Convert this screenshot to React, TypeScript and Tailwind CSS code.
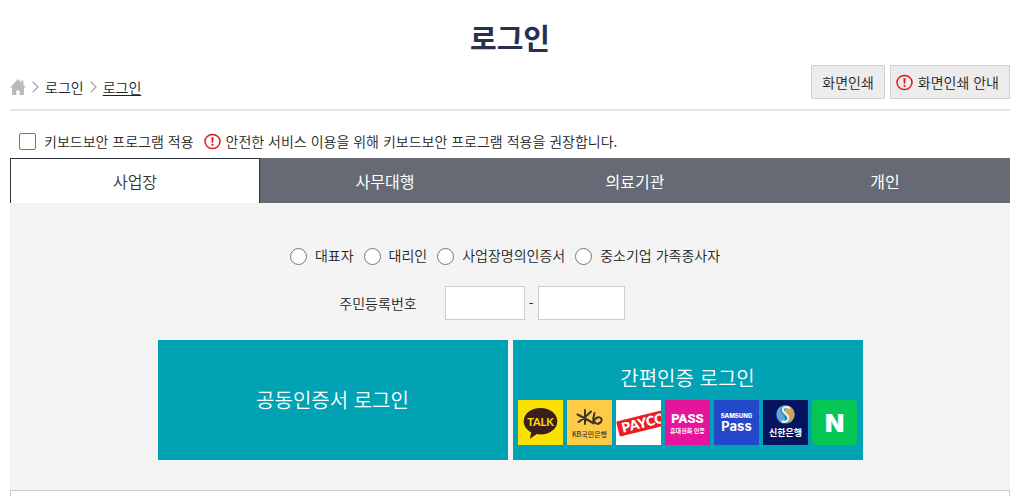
import { useState } from "react";
import type { ReactNode } from "react";

const TABS = ["사업장", "사무대행", "의료기관", "개인"];

const USER_TYPES = [
  { id: "owner", label: "대표자" },
  { id: "agent", label: "대리인" },
  { id: "company", label: "사업장명의인증서" },
  { id: "family", label: "중소기업 가족종사자" },
];

function HomeIcon() {
  return (
    <svg width="16" height="16" viewBox="0 0 16 16" fill="#b9b9b9" aria-hidden="true">
      <path d="M8 0 0 8.6h2.1V16h4.2v-4.6h3.4V16h4.2V8.6H16l-2.6-2.8V1.6h-2.2v1.8z" />
    </svg>
  );
}

function Chevron() {
  return (
    <svg width="7" height="12" viewBox="0 0 7 12" fill="none" stroke="#a5a5a5" strokeWidth="1.2" aria-hidden="true">
      <path d="M.7.8 6 6 .7 11.2" />
    </svg>
  );
}

function AlertIcon() {
  return (
    <svg width="17" height="17" viewBox="0 0 17 17" fill="none" className="shrink-0" aria-hidden="true">
      <ellipse cx="8.5" cy="8.5" rx="7.5" ry="7" stroke="#e5151b" strokeWidth="1.5" />
      <path d="M7.4 4.2h2.2l-.4 5.6H7.8z" fill="#e5151b" />
      <circle cx="8.5" cy="11.8" r="1.1" fill="#e5151b" />
    </svg>
  );
}

function Logo({ children, label, rounded }: { children: ReactNode; label: string; rounded?: boolean }) {
  return (
    <svg
      width="45"
      height="45"
      viewBox="0 0 45 45"
      role="img"
      aria-label={label}
      textAnchor="middle"
      className={rounded ? "rounded overflow-hidden" : "overflow-hidden"}
    >
      {children}
    </svg>
  );
}

function ProviderLogos() {
  return (
    <span className="flex justify-center gap-1">
      <Logo label="카카오톡">
        <rect width="45" height="45" fill="#fae100" />
        <path
          d="M22.5 8C13 8 5.7 13.8 5.7 21.2c0 4.7 3 8.8 7.5 11.1l-1.3 6.5 7-4.7c1.2.2 2.4.3 3.6.3 9.5 0 16.8-5.8 16.8-13.2S32 8 22.5 8z"
          fill="#3b1e1e"
        />
        <text x="22.5" y="26" fontSize="11" fontWeight="700" fill="#fae100" fontFamily="Lato, sans-serif">TALK</text>
      </Logo>
      <Logo label="KB국민은행">
        <rect width="45" height="45" fill="#fdcb45" />
        <g fill="none" stroke="#3d352b" strokeWidth="2">
          <path d="M18 10v14M10.5 14.5c5 2.5 11 5.5 16 9M24 11.5c-3 3-8.5 8-12.5 10.5M27.5 13c-1 3-1.5 6-1 9" strokeLinecap="round" />
          <ellipse cx="31" cy="20.5" rx="3.8" ry="3" transform="rotate(-25 31 20.5)" />
        </g>
        <text x="22.5" y="36.5" fontSize="7" fontWeight="500" fill="#3d352b" fontFamily="Noto Sans CJK KR, sans-serif">KB국민은행</text>
      </Logo>
      <Logo label="페이코">
        <rect width="45" height="45" fill="#fff" />
        <g transform="rotate(-14 4 33)">
          <rect x="3" y="21" width="50" height="15.5" rx="1.5" fill="#ed1c24" />
          <text x="7" y="33.5" fontSize="13.5" fontWeight="800" fill="#fff" textAnchor="start" fontFamily="Lato, sans-serif">PAYCO</text>
        </g>
      </Logo>
      <Logo label="PASS 휴대전화 인증">
        <rect width="45" height="45" fill="#e6149c" />
        <text x="22.5" y="23" fontSize="13" fontWeight="900" fill="#fff" fontFamily="Roboto, sans-serif">PASS</text>
        <text x="22.5" y="32.5" fontSize="6" fontWeight="700" fill="#fff" fontFamily="Noto Sans CJK KR, sans-serif">휴대전화 인증</text>
      </Logo>
      <Logo label="삼성패스">
        <rect width="45" height="45" fill="#2348c9" />
        <text x="22.5" y="18" fontSize="6" fontWeight="800" fill="#fff" fontFamily="Inter, sans-serif">SAMSUNG</text>
        <text x="22.5" y="31" fontSize="13" fontWeight="700" fill="#fff" fontFamily="Inter, sans-serif">Pass</text>
      </Logo>
      <Logo label="신한은행">
        <rect width="45" height="45" fill="#06145f" />
        <circle cx="22.5" cy="14.5" r="9.3" fill="#2b7bb9" />
        <path d="M15 9a9.3 9.3 0 0 1 8-3.8c-5 2-7 5-4 8.3s4.5 6.5 1 10c-5.5-1.5-8-8-5-14.5z" fill="#5fa9d8" />
        <path d="M25 5.500c4 1.500 6.500 5 6.500 9s-3 8-7 9c3.500-4 2.500-7-1-10-3-2.500-2-6 1.500-8z" fill="#c8a755" />
        <path d="M27 8.500c-4-3.500-9-.5-6.500 3s7 5 4 9c-1.500 1.800-4 1.500-5.500.5" fill="none" stroke="#e9f2f2" strokeWidth="2.2" />
        <text x="22.5" y="36" fontSize="9" fontWeight="700" fill="#fff" fontFamily="Noto Sans CJK KR, sans-serif">신한은행</text>
      </Logo>
      <Logo label="네이버" rounded>
        <rect width="45" height="45" fill="#06c755" />
        <text x="22.5" y="31.5" fontSize="25" fontWeight="900" fill="#fff" fontFamily="Inter, sans-serif">N</text>
      </Logo>
    </span>
  );
}

export default function App() {
  const [activeTab, setActiveTab] = useState("사업장");
  const [userType, setUserType] = useState("");

  return (
    <main
      lang="ko"
      className="bg-white pl-2.5 pr-3 pt-[15px] text-sm font-[350] text-[#222]"
      style={{ fontFamily: '"Noto Sans CJK KR", "Noto Sans", sans-serif' }}
    >
      <h1 className="text-center text-[29px] leading-11 font-bold text-[#27304d]">로그인</h1>

      {/* Breadcrumb and print buttons */}
      <div className="mt-1 flex items-center justify-between border-b-2 border-[#e5e5e5] pb-2.5 pt-0.5">
        <nav aria-label="현재 위치" className="flex items-center gap-1.5 pt-2.5">
          <a href="#home" aria-label="홈"><HomeIcon /></a>
          <Chevron />
          <a href="#login">로그인</a>
          <Chevron />
          <a href="#login" aria-current="page" className="underline underline-offset-2">로그인</a>
        </nav>
        <div className="flex gap-[5px]">
          <button type="button" className="h-[34px] border border-[#d2d2d2] bg-[#ececec] px-2.5">화면인쇄</button>
          <button type="button" className="flex h-[34px] items-center gap-[5px] border border-[#d2d2d2] bg-[#ececec] pl-[5px] pr-2.5">
            <AlertIcon />
            화면인쇄 안내
          </button>
        </div>
      </div>

      {/* Keyboard security option */}
      <div className="flex items-center pl-2 pt-5 pb-[7px]">
        <input
          id="keyboard-security"
          type="checkbox"
          className="ml-px size-[17px] appearance-none rounded-xs border border-[#767676] bg-white checked:bg-[#27304d]"
        />
        <label htmlFor="keyboard-security" className="ml-2">키보드보안 프로그램 적용</label>
        <p className="ml-2.5 flex items-center gap-[5px]">
          <AlertIcon />
          안전한 서비스 이용을 위해 키보드보안 프로그램 적용을 권장합니다.
        </p>
      </div>

      {/* Member type tabs */}
      <div role="tablist" className="grid grid-cols-4 bg-[#666a75]">
        {TABS.map((tab) => (
          <button
            key={tab}
            type="button"
            role="tab"
            aria-selected={activeTab === tab}
            onClick={() => setActiveTab(tab)}
            className={
              activeTab === tab
                ? "h-[45px] border border-b-0 border-[#2d3644] bg-white text-base text-[#333]"
                : "h-[45px] text-base font-normal text-white"
            }
          >
            {tab}
          </button>
        ))}
      </div>

      <form className="bg-[#f4f4f4] pb-[30px] pt-[42px]" onSubmit={(e) => e.preventDefault()}>
        <div role="radiogroup" aria-label="사용자 구분" className="flex justify-center gap-2.5 pr-2.5">
          {USER_TYPES.map((type) => (
            <label key={type.id} className="flex items-center gap-2">
              <input
                type="radio"
                name="userType"
                checked={userType === type.id}
                onChange={() => setUserType(type.id)}
                className="mt-0.5 size-[17px] appearance-none rounded-full border border-[#767676] bg-white checked:border-4"
              />
              {type.label}
            </label>
          ))}
        </div>

        <div className="mt-[21px] flex items-center justify-center pr-14">
          <label htmlFor="resident-front" className="mr-7">주민등록번호</label>
          <input id="resident-front" type="text" maxLength={6} className="h-[34px] w-20 border border-[#ccc] bg-white px-2" />
          <span className="w-[13px] text-center">-</span>
          <input aria-label="주민등록번호 뒷자리" type="password" maxLength={7} className="h-[34px] w-[87px] border border-[#ccc] bg-white px-2" />
        </div>

        <div className="mt-5 flex justify-center gap-[5px]">
          <button type="button" className="h-[120px] w-[350px] bg-[#00a2b3] text-xl text-white">
            공동인증서 로그인
          </button>
          <button type="button" className="h-[120px] w-[350px] bg-[#00a2b3] pt-2 text-xl text-white">
            <span className="mb-2 block">간편인증 로그인</span>
            <ProviderLogos />
          </button>
        </div>
      </form>

      <section className="h-1.5 border border-b-0 border-[#ccc]" />
    </main>
  );
}
